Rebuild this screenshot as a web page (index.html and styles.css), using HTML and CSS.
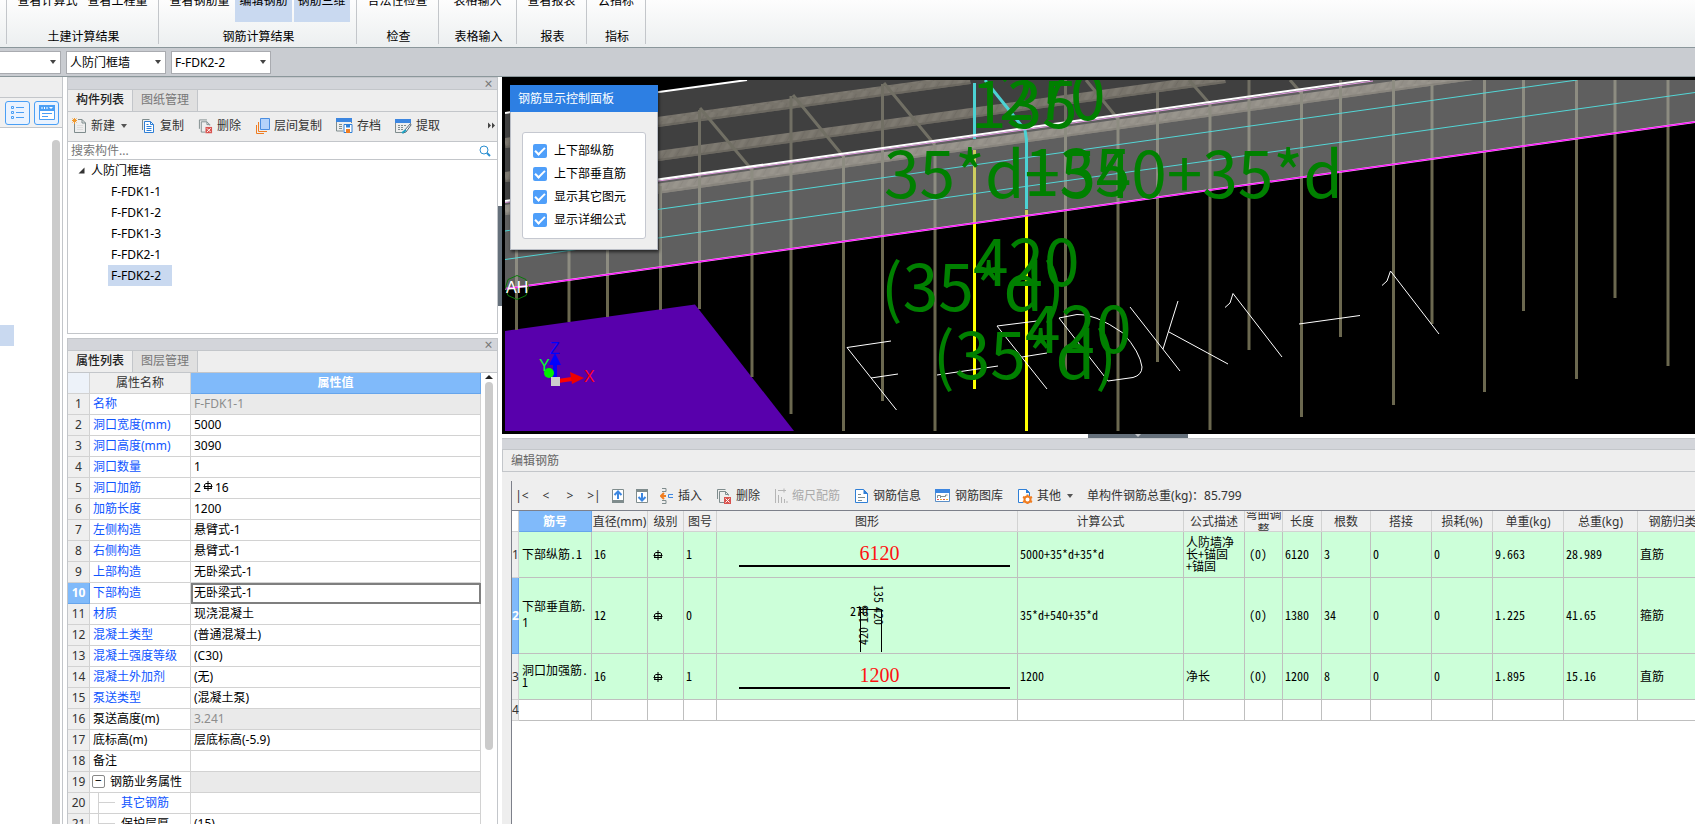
FILE: index.html
```html
<!DOCTYPE html>
<html lang="zh-CN">
<head>
<meta charset="utf-8">
<title>编辑钢筋</title>
<link rel="stylesheet" href="styles.css">
</head>
<body>
<svg class="defs" aria-hidden="true">
  <symbol id="rebar" viewBox="0 0 10 10"><path d="M5 0v10M3 2.500h4l1.500 1v3l-1.500 1h-4l-1.500-1v-3zM.5 5.500h9M1 7.500h8" fill="none" stroke="currentColor"/></symbol>
  <symbol id="i-delete" viewBox="0 0 16 16"><path d="M1.500 11V1.500h8" fill="none" stroke="#7f8c8d"/><path d="M8 14.500H3.500v-11h6l3 3v1M9.500 3.500v3h3" fill="none" stroke="#7f8c8d"/><rect x="8" y="9" width="7" height="7" fill="#d9534f"/><path d="M9.500 10.500l4 4m0-4l-4 4" stroke="#fff"/></symbol>
</svg>

<header class="ribbon">
  <section class="group g0"></section>
  <section class="group g1"><div class="btns"><button>查看计算式</button><button>查看工程量</button></div><span class="cap">土建计算结果</span></section>
  <section class="group g2"><div class="btns"><button>查看钢筋量</button><button class="on">编辑钢筋</button><button class="on">钢筋三维</button></div><span class="cap">钢筋计算结果</span></section>
  <section class="group g3"><div class="btns"><button>合法性检查</button></div><span class="cap">检查</span></section>
  <section class="group g4"><div class="btns"><button>表格输入</button></div><span class="cap">表格输入</span></section>
  <section class="group g5"><div class="btns"><button>查看报表</button></div><span class="cap">报表</span></section>
  <section class="group g6"><div class="btns"><button>云指标</button></div><span class="cap">指标</span></section>
</header>

<nav class="pickers">
  <label class="pick first"><select aria-label="楼层"><option></option></select></label>
  <label class="pick"><select aria-label="构件类型"><option>人防门框墙</option></select></label>
  <label class="pick"><select aria-label="构件"><option>F-FDK2-2</option></select></label>
</nav>

<main class="work">
  <aside class="rail">
    <div class="rail-top"></div>
    <div class="rail-tools">
      <button aria-label="列表"><svg width="16" height="16" viewBox="0 0 16 16" fill="none" stroke="#4a9ff5"><path d="M1.500 1.500h2v2h-2zM1.500 6.500h2v2h-2zM1.500 11.500h2v2h-2zM6 2.500h8M6 7.500h8M6 12.500h8"/></svg></button>
      <button aria-label="窗口"><svg width="16" height="16" viewBox="0 0 16 16"><path d="M.5.5h15v14H.5z" fill="#fff" stroke="#4a9ff5"/><path d="M0 0h16v6H0z" fill="#4a9ff5"/><path d="M3 2v2M5.500 2v2M8 2v2" stroke="#fff"/><path d="M10 2h4l-2 2z" fill="#fff"/><path d="M3 8.500h10M3 11.500h6" stroke="#4a9ff5"/></svg></button>
    </div>
    <div class="rail-body"><span class="rail-mark"></span><span class="thumb"></span></div>
  </aside>

  <div class="docks">
    <section class="panel top">
      <div class="strip"><button aria-label="关闭">×</button></div>
      <div class="tabs"><button class="tab on">构件列表</button><button class="tab">图纸管理</button></div>
      <div class="tools">
        <button><svg width="15" height="16" viewBox="0 0 15 16"><path d="M2.500 6v8.500h11V5l-3.500-3.500H6M10 1.500V5h3.500" fill="none" stroke="#7f8c8d"/><path d="M5 7.500h6M5 9.500h6M5 11.500h6" stroke="#ddd"/><path d="M2.500 0v6M0 2.500h5M.5.5l4 4m0-4l-4 4" stroke="#f29a2e"/></svg>新建<i class="caret"></i></button>
        <button><svg width="15" height="16" viewBox="0 0 15 16"><path d="M1.500 12V1.500h7" fill="none" stroke="#7f8c8d"/><path d="M3.500 3.500h6l3 3v8h-9z" fill="#fff" stroke="#2f7fd6"/><path d="M9.500 3.500v3h3M5.500 6.500h2M5.500 8.500h5M5.500 10.500h5M5.500 12.500h5" fill="none" stroke="#2f7fd6"/></svg>复制</button>
        <button><svg width="15" height="16" viewBox="0 0 16 16"><use href="#i-delete" width="16" height="16"/></svg>删除</button>
        <button><svg width="15" height="16" viewBox="0 0 15 16"><path d="M5.500.5h9v11h-9z" fill="#b4d2fa" stroke="#4a8de0"/><path d="M3.500 4v9.500H12M1.500 7v8.500H9" fill="none" stroke="#ef7d22"/></svg>层间复制</button>
        <button><svg width="17" height="16" viewBox="0 0 17 16"><path d="M.5 1v12H7M15.500 1v4" fill="none" stroke="#7f8c8d"/><path d="M0 0h16v4H0z" fill="#3c86e0"/><path d="M3 6.500h3M3 8.500h3M3 10.500h3M8 6.500h3" stroke="#7f8c8d"/><path d="M8 6.500h8v8H8z" fill="#fff" stroke="#2f7fd6"/><path d="M10 6.500h4v3h-4z" fill="#2f7fd6"/><path d="M10 11h4v4h-4z" fill="#ef7d22"/></svg>存档</button>
        <button><svg width="17" height="16" viewBox="0 0 17 16"><path d="M.5 2v12.500H8M15.500 2v3" fill="none" stroke="#7f8c8d"/><path d="M0 1h16v4H0z" fill="#3c86e0"/><path d="M3 7.500h2M6 7.500h2M9 7.500h2M3 9.500h2M6 9.500h2M3 11.500h2M6 11.500h2" stroke="#7f8c8d"/><path d="M15.500 5.500l-6 7-1.500 2.500 3-1 5-7z" fill="#fff" stroke="#566573"/><path d="M7 15l4-3" stroke="#1fa3c4" stroke-width="2"/></svg>提取</button>
        <button class="more" aria-label="更多"><svg width="8" height="7" viewBox="0 0 8 7"><path d="M0 .5l3 3-3 3zM4 .5l3 3-3 3z" fill="#444"/></svg></button>
      </div>
      <div class="search"><input type="search" placeholder="搜索构件..." aria-label="搜索构件"><svg width="12" height="12" viewBox="0 0 12 12" fill="none" stroke="#2b8fd0"><circle cx="5" cy="5" r="4"/><path d="M8 8l3 3" stroke-width="2"/></svg></div>
      <ul class="tree">
        <li class="root"><svg width="7" height="7" viewBox="0 0 7 7"><path d="M6.500.5v6h-6z" fill="#333"/></svg>人防门框墙</li>
        <li><span>F-FDK1-1</span></li><li><span>F-FDK1-2</span></li><li><span>F-FDK1-3</span></li><li><span>F-FDK2-1</span></li><li><span class="sel">F-FDK2-2</span></li>
      </ul>
    </section>

    <section class="panel bottom">
      <div class="strip"><button aria-label="关闭">×</button></div>
      <div class="tabs"><button class="tab on">属性列表</button><button class="tab">图层管理</button></div>
      <div class="props-wrap">
        <table class="props">
          <colgroup><col class="p1"><col class="p2"><col></colgroup>
          <thead><tr><th class="corner"></th><th>属性名称</th><th class="hot">属性值</th></tr></thead>
          <tbody>
            <tr><th>1</th><td class="blue">名称</td><td class="off">F-FDK1-1</td></tr>
            <tr><th>2</th><td class="blue">洞口宽度(mm)</td><td>5000</td></tr>
            <tr><th>3</th><td class="blue">洞口高度(mm)</td><td>3090</td></tr>
            <tr><th>4</th><td class="blue">洞口数量</td><td>1</td></tr>
            <tr><th>5</th><td class="blue">洞口加筋</td><td>2<svg class="rebar up" width="10" height="10"><use href="#rebar"/></svg>16</td></tr>
            <tr><th>6</th><td class="blue">加筋长度</td><td>1200</td></tr>
            <tr><th>7</th><td class="blue">左侧构造</td><td>悬臂式-1</td></tr>
            <tr><th>8</th><td class="blue">右侧构造</td><td>悬臂式-1</td></tr>
            <tr><th>9</th><td class="blue">上部构造</td><td>无卧梁式-1</td></tr>
            <tr><th class="hot">10</th><td class="blue">下部构造</td><td class="cur">无卧梁式-1</td></tr>
            <tr><th>11</th><td class="blue">材质</td><td>现浇混凝土</td></tr>
            <tr><th>12</th><td class="blue">混凝土类型</td><td>(普通混凝土)</td></tr>
            <tr><th>13</th><td class="blue">混凝土强度等级</td><td>(C30)</td></tr>
            <tr><th>14</th><td class="blue">混凝土外加剂</td><td>(无)</td></tr>
            <tr><th>15</th><td class="blue">泵送类型</td><td>(混凝土泵)</td></tr>
            <tr><th>16</th><td>泵送高度(m)</td><td class="off">3.241</td></tr>
            <tr><th>17</th><td>底标高(m)</td><td>层底标高(-5.9)</td></tr>
            <tr><th>18</th><td>备注</td><td></td></tr>
            <tr><th>19</th><td class="parent"><button class="fold" aria-label="折叠">−</button>钢筋业务属性</td><td class="off"></td></tr>
            <tr><th>20</th><td class="blue kid">其它钢筋</td><td></td></tr>
            <tr><th>21</th><td class="kid">保护层厚</td><td>(15)</td></tr>
          </tbody>
        </table>
        <div class="vbar"><i></i><span></span></div>
      </div>
    </section>
  </div>

  <div class="vsplit"><span></span></div>

  <div class="stage">
    <section class="view">
      <svg class="scene" viewBox="505 80 1190 351" preserveAspectRatio="xMinYMin slice">
        <defs>
          <pattern id="rope" width="14" height="10" patternUnits="userSpaceOnUse" patternTransform="rotate(-8)"><rect width="14" height="10" fill="#7a715f"/><path d="M-3 10L5 0M11 10L19 0" stroke="#877e6c" stroke-width="4"/><path d="M3 10L9 2" stroke="#655c4b"/></pattern>
        </defs>
        <path d="M505 80h1190v351H505z" fill="#000"/>
        <path d="M505 331L695 304.500L794 431H505z" fill="#5800ac"/>
        <g stroke="url(#rope)" stroke-width="10"><path d="M505 143L970 79"/><path d="M505 177L1225 78"/><path d="M505 210L1480 74"/></g>
        <g stroke="#4d4636" stroke-opacity=".6" stroke-width="2"><path d="M505 147L970 83"/><path d="M505 181L1225 82"/><path d="M505 214L1480 78"/></g>
        <g stroke="#6b684f" stroke-width="3" fill="none">
          <path d="M516.500 215V330M569 200V322M607.500 194V317M660.500 186V310M699.500 110V309M752 168V377M791 96V414M843.500 156V431M882.500 84V401M935 145V431M1065.500 80V376M1118 117V431M1157.500 90V362M1210 103V430M1249 80V350M1301.500 90V417M1340.500 80V337M1393.500 80V405M1432 85V324M1484.500 80V392M1523.500 80V311M1576.500 80V379M1615 80V298M1668 80V366"/>
          <path d="M700 108L752 170M793 95L843 156M884 83L935 145M1086 80L1118 119M1189 80L1210 104M1290 80L1302 94"/>
        </g>
        <path d="M974.500 150V389M1026.500 210V431" stroke="#ff0" stroke-width="3"/>
        <path d="M505 113L747 80H1370L505 201z" fill="#767676" fill-opacity=".54"/>
        <path d="M505 201L1370 80H1695V122L505 289z" fill="#a7a7a7" fill-opacity=".57"/>
        <path d="M974.500 83V139M985 80L1025 130L1026.500 140V209" fill="none" stroke="#4cd2d4" stroke-width="3"/>
        <path d="M505 231L1577 80M505 259.500L1695 92.500" stroke="#53d6d6"/>
        <path d="M505 113L747 80" stroke="#fff" stroke-width="2"/>
        <path d="M505 202.500L1373 81" stroke="#e39be3"/><path d="M505 201L1370 79.500" stroke="#fff" stroke-width="2"/>
        <path d="M505 289L1695 122" stroke="#ff9cff" stroke-width="2"/><path d="M505 289L1695 122" stroke="#f0f"/>
        <g fill="none" stroke="#fff">
          <path d="M891 341L847 347.500L896.500 410M871 378L898 374M937 375L998 366M1037 321L997 326L1047 389M1022 357L1047 353"/>
          <path d="M1108 381L1059 318L1077 314.500Q1094 313 1123 333Q1140 352 1142 367Q1142 375 1133 377.500z"/>
          <path d="M1130 307L1180 371M1178 301L1163 349M1169 332L1228 364M1225 307.500L1230 303L1233 293.500L1282 357M1299 324L1360 315.500M1382 285.500L1387 281L1390.500 271L1439 334"/>
        </g>
        <g class="dims">
          <text x="971" y="128">135</text><text x="999" y="120">270</text>
          <text x="884" y="198">35*d+540+35*d</text><text x="1024" y="196">135</text>
          <text x="973" y="286">420</text><text x="881" y="311">(35*d)</text>
          <text x="1025" y="353">420</text><text x="933" y="379">(35*d)</text>
        </g>
        <path d="M517 275.500l9 4 2.500 8-2.500 8-9 4-9-4-2.500-8 2.500-8z" fill="none" stroke="#0a7a0a"/>
        <text class="ax" x="506" y="293" fill="#fff">AH</text>
        <path d="M555 377V362" stroke="#00f" stroke-width="4"/><path d="M549 365l6-12 6 12z" fill="#00f"/>
        <path d="M558 381l14-2" stroke="#f00" stroke-width="4"/><path d="M570 372l14 6-12 6z" fill="#e00"/>
        <circle cx="549" cy="373" r="5" fill="#0e0"/><path d="M551 377h9v9h-9z" fill="#ccc"/>
        <text class="ax" x="550" y="354" fill="#00f">Z</text><text class="ax" x="539" y="371" fill="#0f3">Y</text><text class="ax" x="584" y="382" fill="#f02">X</text>
      </svg>
      <div class="dialog">
        <h2>钢筋显示控制面板</h2>
        <div class="opts">
          <label><input type="checkbox" checked>上下部纵筋</label>
          <label><input type="checkbox" checked>上下部垂直筋</label>
          <label><input type="checkbox" checked>显示其它图元</label>
          <label><input type="checkbox" checked>显示详细公式</label>
        </div>
      </div>
    </section>
    <div class="hsplit"><span></span></div>
    <section class="editor">
      <div class="strip"></div>
      <h2 class="title">编辑钢筋</h2>
      <div class="edit-body">
        <div class="bar">
          <div class="nav">
            <button>|&lt;</button><button>&lt;</button><button>&gt;</button><button>&gt;|</button>
            <button aria-label="上移"><svg width="12" height="14" viewBox="0 0 12 14"><path d="M.5.500h11v13H.5z" fill="#fff" stroke="#7f8c8d"/><path d="M0 11h12v3H0z" fill="#7f8c8d"/><path d="M6 2.500v7.500M2.500 6L6 2.500 9.500 6" fill="none" stroke="#3c86e0" stroke-width="2"/></svg></button>
            <button aria-label="下移"><svg width="12" height="14" viewBox="0 0 12 14"><path d="M.5.500h11v13H.5z" fill="#fff" stroke="#7f8c8d"/><path d="M0 0h12v3H0z" fill="#7f8c8d"/><path d="M6 4v7.500M2.500 8L6 11.500 9.500 8" fill="none" stroke="#3c86e0" stroke-width="2"/></svg></button>
          </div>
          <button><svg width="14" height="16" viewBox="0 0 14 16"><path d="M2 .5h4v3H2M2 15.500h4v-3H2" fill="none" stroke="#7f8c8d"/><path d="M1 8h5M4 5L1 8l3 3" fill="none" stroke="#ef7d22" stroke-width="2"/><path d="M13 6.500H8.500v3H13" fill="none" stroke="#3c86e0"/></svg>插入</button>
          <button><svg width="16" height="16" viewBox="0 0 16 16"><use href="#i-delete" width="16" height="16"/></svg>删除</button>
          <button disabled><svg width="14" height="16" viewBox="0 0 14 16"><path d="M1.500 1v14M4 2.500h8M10 .5v4M4.500 7v8M7.500 9v6M10.500 11v4M13 13v2" stroke="#b5b5b5" fill="none"/></svg>缩尺配筋</button>
          <button><svg width="15" height="16" viewBox="0 0 15 16"><path d="M1.500 1.500h8l4 4v9h-12z" fill="#fff" stroke="#2f7fd6"/><path d="M9.500 1v5h4.500z" fill="#2f7fd6"/><path d="M4 6.500h3M4 9.500h7M4 12.500h4" stroke="#7f8c8d"/></svg>钢筋信息</button>
          <button><svg width="16" height="16" viewBox="0 0 16 16"><path d="M.5 1.500h14v12H.5z" fill="#fff" stroke="#5b8fc7"/><path d="M0 1h15v4H0z" fill="#3c86e0"/><path d="M2.500 10V7.500h3V10M5.500 8.500h5V7h2" fill="none" stroke="#7f8c8d"/><path d="M2 11.500h2M8 11.500h2" stroke="#e8574f"/><path d="M5 11.500h2M11 11.500h2" stroke="#f0b030"/></svg>钢筋图库</button>
          <button><svg width="16" height="16" viewBox="0 0 16 16"><path d="M6 14.500H1.500v-13h8l3 3V8" fill="#fff" stroke="#2f7fd6"/><path d="M9 1v4h4z" fill="#2f7fd6"/><circle cx="10.500" cy="11.500" r="3" fill="#fff" stroke="#ef7d22" stroke-width="2"/><path d="M10.500 6.500v2M10.500 14v2M6 9l2 1M13 13l2 1M15 9l-2 1M6 14l2-1" stroke="#ef7d22" stroke-width="2"/></svg>其他<i class="caret"></i></button>
          <span class="total">单构件钢筋总重(kg)：85.799</span>
        </div>
        <div class="grid-wrap">
          <table class="grid">
            <colgroup><col class="c0"><col class="c1"><col class="c2"><col class="c3"><col class="c4"><col class="c5"><col class="c6"><col class="c7"><col class="c8"><col class="c9"><col class="c10"><col class="c11"><col class="c11"><col class="c12"><col class="c13"><col class="c14"></colgroup>
            <thead><tr><th class="blank"></th><th class="hot">筋号</th><th>直径(mm)</th><th>级别</th><th>图号</th><th>图形</th><th>计算公式</th><th>公式描述</th><th><div class="clip">弯曲调整</div></th><th>长度</th><th>根数</th><th>搭接</th><th>损耗(%)</th><th>单重(kg)</th><th>总重(kg)</th><th>钢筋归类</th></tr></thead>
            <tbody>
              <tr class="r46"><th>1</th><td class="name">下部纵筋.1</td><td>16</td><td class="mid"><svg class="rebar" width="10" height="10"><use href="#rebar"/></svg></td><td>1</td><td class="shape"><span>6120</span><hr></td><td>5000+35*d+35*d</td><td>人防墙净长+锚固+锚固</td><td class="fix">(0)</td><td>6120</td><td>3</td><td>0</td><td>0</td><td>9.663</td><td>28.989</td><td>直筋</td></tr>
              <tr class="r76"><th class="hot">2</th><td class="ui">下部垂直筋.1</td><td>12</td><td class="mid"><svg class="rebar" width="10" height="10"><use href="#rebar"/></svg></td><td>0</td>
                <td class="draw"><svg width="60" height="74" viewBox="0 0 60 74"><path d="M23.500 28v45M22 30.500h22.500V73" fill="none" stroke="#000"/><text x="13" y="37">270</text><text transform="translate(37 6) rotate(90)">135</text><text transform="translate(37 28) rotate(90)">420</text><text transform="translate(31 44) rotate(-90)">135</text><text transform="translate(31 66) rotate(-90)">420</text></svg></td>
                <td>35*d+540+35*d</td><td></td><td class="fix">(0)</td><td>1380</td><td>34</td><td>0</td><td>0</td><td>1.225</td><td>41.65</td><td>箍筋</td></tr>
              <tr class="r46"><th>3</th><td class="name">洞口加强筋.1</td><td>16</td><td class="mid"><svg class="rebar" width="10" height="10"><use href="#rebar"/></svg></td><td>1</td><td class="shape"><span>1200</span><hr></td><td>1200</td><td>净长</td><td class="fix">(0)</td><td>1200</td><td>8</td><td>0</td><td>0</td><td>1.895</td><td>15.16</td><td>直筋</td></tr>
              <tr class="r21"><th>4</th><td></td><td></td><td></td><td></td><td></td><td></td><td></td><td></td><td></td><td></td><td></td><td></td><td></td><td></td><td></td></tr>
            </tbody>
          </table>
        </div>
      </div>
    </section>
  </div>
</main>
</body>
</html>
```
FILE: styles.css
```css
* { box-sizing: border-box; }
body {
  margin: 0;
  height: 100vh;
  overflow: hidden;
  display: flex;
  flex-direction: column;
  font: 12px/18px "Noto Sans", "Noto Sans CJK SC", sans-serif;
  color: #000;
  background: #fff;
}
button, input, select { font: inherit; color: inherit; }
button { border: 0; padding: 0; background: none; white-space: nowrap; }
svg { flex: none; }
.defs { position: absolute; width: 0; height: 0; }

/* ribbon */
.ribbon {
  flex: none;
  height: 48px;
  display: flex;
  overflow: hidden;
  background: linear-gradient(#fdfdfd, #eceff0);
  border-bottom: 1px solid #8b979b;
}
.group {
  flex: none;
  height: 44px;
  display: flex;
  flex-direction: column;
  justify-content: flex-end;
  align-items: center;
  border-right: 1px solid #c3c6ca;
}
.g0 { width: 7px; }
.g1 { width: 152px; }
.g2 { width: 198px; }
.g3 { width: 82px; }
.g4 { width: 78px; }
.g5 { width: 70px; }
.g6 { width: 59px; }
.btns { display: flex; gap: 2px; }
.btns button { height: 40px; padding: 10px 4px 12px; line-height: 18px; }
.btns .on { background: #c9d9f0; }
.cap { line-height: 14px; margin: 8px 0 0 2px; }

/* selectors */
.pickers {
  flex: none;
  height: 29px;
  display: flex;
  align-items: center;
  gap: 5px;
  background: #c9ccd1;
  border-bottom: 1px solid #8b979b;
}
.pick { display: flex; align-items: center; width: 100px; height: 23px; background: #fff; border: 1px solid #a9abb0; }
.pick.first { width: 61px; border-left: 0; }
.pick select { appearance: none; border: 0; background: none; flex: 1; min-width: 0; height: 21px; padding: 1px 3px 0; outline: 0; }
.pick::after { content: ""; border: 3px solid transparent; border-top: 4px solid #444; border-bottom: 0; margin-right: 4px; }

.work { flex: 1; min-height: 0; display: flex; }

/* far left rail */
.rail { flex: none; width: 63px; display: flex; flex-direction: column; border-right: 1px solid #c3c6ca; }
.rail-top { height: 21px; background: #eee; border-bottom: 1px solid #c3c6ca; }
.rail-tools { height: 30px; display: flex; gap: 4px; padding: 3px 0 0 5px; background: #f1f1f1; border-bottom: 1px solid #c3c6ca; }
.rail-tools button { display: grid; place-items: center; width: 25px; height: 24px; border: 1px solid #4a9ff5; border-radius: 3px; background: #eaf3ff; }
.rail-body { flex: 1; display: flex; justify-content: space-between; padding: 12px 2px 0 0; }
.rail-mark { width: 14px; height: 21px; margin-top: 185px; background: #c9d9f0; }
.thumb { width: 8px; border-radius: 4px 4px 0 0; background: #cbcbcb; }

/* docked panels */
.docks { flex: none; width: 435px; padding-left: 4px; display: flex; flex-direction: column; gap: 4px; }
.panel { border: 1px solid #c3c6ca; display: flex; flex-direction: column; background: #fff; }
.panel.top { flex: none; height: 257px; }
.panel.bottom { flex: 1; min-height: 0; overflow: hidden; border-bottom: 0; }
.strip { flex: none; height: 12px; display: flex; justify-content: flex-end; background: #d3d5da; border-bottom: 1px solid #c3c6ca; }
.strip button { width: 17px; line-height: 10px; font-size: 14px; color: #777; }
.tabs { flex: none; height: 22px; display: flex; background: #eee; border-bottom: 1px solid #c3c6ca; }
.tab { width: 65px; padding-bottom: 2px; border-right: 1px solid #c3c6ca; background: #e0e0e0; color: #777; }
.tab.on { background: #eee; color: #222; font-weight: 500; }
.tools { flex: none; height: 30px; display: flex; align-items: center; gap: 14px; padding: 0 1px 2px 4px; background: #eee; border-bottom: 1px solid #c3c6ca; color: #333; }
.tools button, .bar button { display: flex; align-items: center; gap: 4px; }
.tools .more { margin-left: auto; }
.caret { border: 3px solid transparent; border-top: 4px solid #555; border-bottom: 0; margin-left: 2px; }
.search { flex: none; height: 18px; display: flex; align-items: center; padding: 0 6px 0 3px; border-bottom: 1px solid #c3c6ca; }
.search input { flex: 1; min-width: 0; height: 17px; border: 0; padding: 0; outline: 0; background: none; }
.search input::placeholder { color: #777; opacity: 1; }
.tree { list-style: none; margin: 0; padding: 0; line-height: 21px; }
.tree li { padding-left: 40px; height: 21px; }
.tree .root { display: flex; align-items: center; gap: 6px; padding-left: 10px; }
.tree span { display: inline-block; padding: 0 11px 0 3px; }
.tree .sel { background: #c9d9f0; }

.props-wrap { flex: 1; min-height: 0; display: flex; align-items: flex-start; }
.props { flex: 1; min-width: 0; table-layout: fixed; border-spacing: 0; line-height: 18px; }
.p1 { width: 22px; }
.p2 { width: 101px; }
.props th, .props td { height: 21px; padding: 0 0 0 3px; border-right: 1px solid #d2d2d2; border-bottom: 1px solid #d2d2d2; white-space: nowrap; overflow: hidden; text-align: left; }
.props th { padding: 0; text-align: center; font-weight: 400; background: #efefef; color: #333; }
.props .corner { background: #edf2f9; }
.props .hot, .grid .hot { background: #80bafa; color: #fff; font-weight: 700; border-color: #66a5ec; }
.props .blue { color: #0f55ff; }
.props .off { background: #eaeaea; color: #8d8d8d; }
.props .cur { outline: 2px solid #7f7f7f; outline-offset: -2px; }
.props .parent { padding-left: 2px; }
.props .kid { padding-left: 31px; background: linear-gradient(#d2d2d2, #d2d2d2) 8px 0 / 1px 100% no-repeat, linear-gradient(#d2d2d2, #d2d2d2) 9px 9px / 16px 1px no-repeat; }
.fold { width: 13px; height: 13px; line-height: 10px; margin-right: 5px; border: 1px solid #888; border-radius: 2px; background: #fff; vertical-align: 1px; }
.rebar { margin: 0 1px; }
.rebar.up { vertical-align: 1px; margin: 0 2px; }
.vbar { flex: none; width: 16px; height: 377px; display: flex; flex-direction: column; align-items: center; }
.vbar i { margin: 2px 0 3px; border: 4px solid transparent; border-top: 0; border-bottom: 4px solid #222; }
.vbar span { flex: 1; width: 8px; border-radius: 4px; background: #cbcbcb; }

.vsplit { flex: none; width: 4px; padding-top: 129px; }
.vsplit span { display: block; height: 100px; background: #65707b; }

/* right side */
.stage { flex: 1; min-width: 0; display: flex; flex-direction: column; }
.view { flex: none; height: 357px; position: relative; padding: 3px 0 3px 3px; background: #000; }
.scene { display: block; width: 100%; height: 100%; }
.dims { font: 64px "Noto Sans CJK SC", sans-serif; fill: #008000; }
.ax { font: 16px "Liberation Sans", sans-serif; }
.dialog { position: absolute; left: 8px; top: 8px; width: 148px; height: 165px; background: #eee; border: 1px solid #b9bdc5; border-top: 0; box-shadow: 1px 2px 3px #0009; }
.dialog h2 { margin: 0 -1px; padding: 0 8px; font-size: 12px; font-weight: 400; line-height: 27px; color: #fff; background: #2d7fe3; }
.opts { margin: 20px 11px 0; padding: 6px 10px 7px; background: #fff; border: 1px solid #c5c8d0; border-radius: 3px; }
.opts label { display: flex; align-items: center; gap: 7px; height: 23px; white-space: nowrap; }
.opts input { appearance: none; flex: none; display: grid; place-items: center; width: 14px; height: 14px; margin: 0; border-radius: 2px; background: #4f9ffa; }
.opts input::after { content: ""; width: 8px; height: 4px; margin-bottom: 2px; border: solid #fff; border-width: 0 0 2px 2px; transform: rotate(-45deg); }
.hsplit { flex: none; height: 4px; display: flex; justify-content: center; padding-left: 78px; background: #fff; }
.hsplit span { width: 100px; display: grid; justify-items: center; background: #65707b; }
.hsplit span::after { content: ""; border: 3px solid transparent; border-top-color: #c3c6ca; border-bottom: 0; }

.editor { flex: 1; min-height: 0; display: flex; flex-direction: column; background: #eee; border-top: 1px solid #c3c6ca; }
.editor > .strip { height: 11px; }
.title { flex: none; margin: 0; height: 22px; padding: 0 8px; font-size: 12px; font-weight: 400; line-height: 22px; color: #666; border: 1px solid #c3c6ca; border-top: 0; border-right: 0; }
.edit-body { flex: 1; min-height: 0; margin: 9px 0 0 9px; display: flex; flex-direction: column; border-left: 1px solid #7d808a; }
.bar { flex: none; height: 29px; display: flex; align-items: center; gap: 14px; color: #333; white-space: nowrap; }
.nav { display: flex; margin: 0 -8px 0 -2px; }
.nav button { width: 24px; height: 16px; justify-content: center; }
.bar button:disabled { color: #aaa; }
.grid-wrap { flex: 1; min-height: 0; overflow: hidden; background: #fff; border-top: 1px solid #7d808a; }
.grid { width: 1192px; table-layout: fixed; border-spacing: 0; }
.c0 { width: 7px; }
.c1 { width: 73px; }
.c2 { width: 56px; }
.c3 { width: 36px; }
.c4 { width: 33px; }
.c5 { width: 301px; }
.c6 { width: 166px; }
.c7 { width: 61px; }
.c8 { width: 38px; }
.c9 { width: 39px; }
.c10 { width: 49px; }
.c11 { width: 61px; }
.c12 { width: 71px; }
.c13 { width: 74px; }
.c14 { width: 70px; }
.grid th { height: 21px; padding: 0; border-right: 1px solid #d2d2d2; border-bottom: 1px solid #d2d2d2; font-weight: 400; color: #333; background: #efefef; white-space: nowrap; }
.grid thead th { padding-top: 1px; }
.grid .blank { background: #fff; }
.clip { height: 19px; display: flex; align-items: center; white-space: normal; line-height: 15px; overflow: hidden; }
.grid td { padding: 0 3px 2px 2px; border-right: 1px solid #bfbfbf; border-bottom: 1px solid #bfbfbf; background: #ccffd9; font: 12px/12px "Noto Sans CJK SC", sans-serif; font-feature-settings: "hwid"; word-break: break-all; }
.grid .name { padding-left: 3px; }
.grid .ui { padding-left: 3px; font: 12px/16px "Noto Sans", "Noto Sans CJK SC", sans-serif; }
.grid .r46 th { height: 46px; }
.grid .r76 th { height: 76px; }
.grid .r21 td { background: #fff; }
.grid .mid { padding: 0 0 0 4px; }
.grid .fix { padding-left: 4px; }
.grid .shape { vertical-align: top; padding: 9px 7px 0 22px; text-align: center; }
.shape span { display: block; padding-left: 10px; font: 20px/24px "Liberation Serif", serif; color: #ff1010; }
.shape hr { margin: 0; border: 0; height: 2px; background: #000; }
.grid .draw { padding: 0; }
.draw svg { display: block; margin: 0 auto; overflow: visible; }
```
